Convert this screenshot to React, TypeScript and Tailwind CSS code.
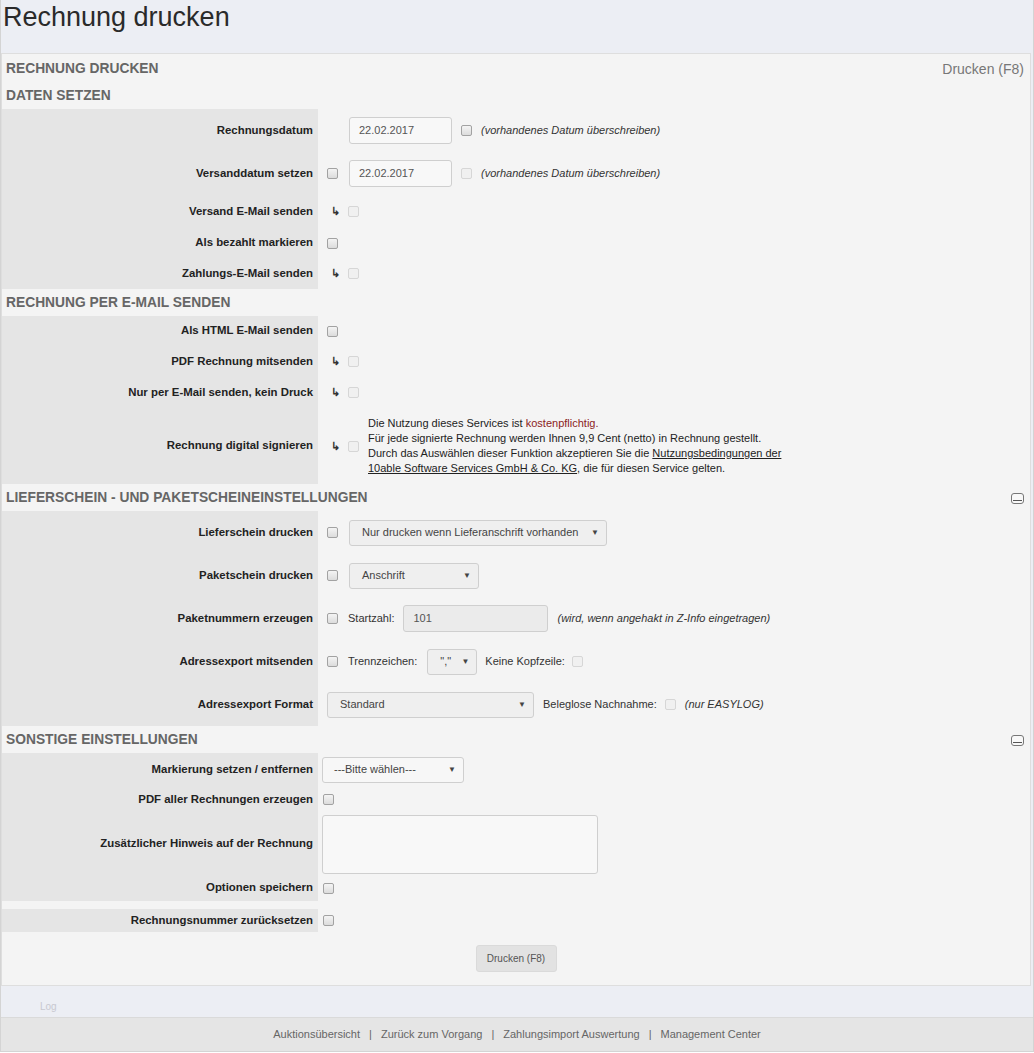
import React from 'react';

const font = { fontFamily: '"Liberation Sans", Arial, sans-serif' };

const Check: React.FC<{ disabled?: boolean; className?: string }> = ({ disabled, className = '' }) => (
  <span
    className={
      'inline-block w-[11px] h-[11px] rounded-[2px] border shrink-0 ' +
      (disabled ? 'border-[#d6d6d6] bg-[#f0f0f0] ' : 'border-[#a2a2a2] bg-gradient-to-b from-[#f4f4f4] to-[#dcdcdc] ') +
      className
    }
  />
);

const Arrow: React.FC = () => <span className="text-[11px] text-[#333] font-bold leading-none w-[19px] pl-[2px] shrink-0">↳</span>;

const Select: React.FC<{ text: string; className: string; textClass?: string }> = ({ text, className, textClass = '' }) => (
  <div className={'flex items-center justify-between h-[26px] border border-[#cfcfcf] rounded-[3px] bg-[#efefef] pr-[7px] shrink-0 ' + className}>
    <span className={'text-[11px] text-[#444] ' + textClass}>{text}</span>
    <span className="text-[8px] text-[#444]">▼</span>
  </div>
);

const Minus: React.FC = () => (
  <span className="inline-flex items-end justify-center w-[13px] h-[11px] border border-[#777] rounded-[3px] pb-[2px] bg-[#f8f8f8]">
    <span className="block w-[9px] h-[1px] bg-[#555]" />
  </span>
);

const Section: React.FC<{ title: string; collapse?: boolean; right?: string }> = ({ title, collapse, right }) => (
  <div className="h-[27px] flex items-center justify-between pl-[4px] pr-[6px] pt-[2px]">
    <span className="text-[13.8px] font-bold text-[#666] uppercase">{title}</span>
    {collapse && <Minus />}
    {right && <span className="text-[14px] text-[#777]">{right}</span>}
  </div>
);

const Row: React.FC<{ label: string; h: string; pl?: string; children?: React.ReactNode }> = ({ label, h, pl = 'pl-[9px]', children }) => (
  <div className={'flex ' + h}>
    <div className="w-[316px] shrink-0 bg-[#e5e5e5] flex items-center justify-end pr-[5px] text-[11.4px] font-bold text-[#222]">
      {label}
    </div>
    <div className={'flex items-center flex-1 ' + pl}>{children}</div>
  </div>
);

const Hint: React.FC<{ children: React.ReactNode; className?: string }> = ({ children, className = '' }) => (
  <span className={'text-[11px] italic text-[#333] ' + className}>{children}</span>
);

const DateInput: React.FC = () => (
  <div className="w-[103px] h-[27px] border border-[#cfcfcf] rounded-[3px] bg-[#f8f8f8] flex items-center pl-[9px] text-[11px] text-[#555] shrink-0">
    22.02.2017
  </div>
);

export default function App() {
  return (
    <div style={font} className="w-full min-h-[1053px] bg-white text-[#333]">
      <div className="border-l border-r border-[#d4d4d4] bg-[#eceef4] min-h-[1050px] border-b">
        {/* Title bar */}
        <div className="h-[53px] pl-[2px]">
          <h1 className="text-[27px] leading-[34px] text-[#2a2a2a]">Rechnung drucken</h1>
        </div>

        {/* Main panel */}
        <div className="mr-[2px] border border-[#dedede] bg-[#f4f4f4] pt-[1px]">
          <Section title="Rechnung drucken" right="Drucken (F8)" />
          <Section title="Daten setzen" />
          <Row label="Rechnungsdatum" h="h-[43px]">
            <span className="w-[22px] shrink-0" />
            <DateInput />
            <Check className="ml-[9px]" />
            <Hint className="ml-[9px]">(vorhandenes Datum überschreiben)</Hint>
          </Row>
          <Row label="Versanddatum setzen" h="h-[43px]">
            <Check className="mr-[11px]" />
            <DateInput />
            <Check disabled className="ml-[9px]" />
            <Hint className="ml-[9px]">(vorhandenes Datum überschreiben)</Hint>
          </Row>
          <Row label="Versand E-Mail senden" h="h-[33px]" pl="pl-[11px]">
            <Arrow />
            <Check disabled />
          </Row>
          <Row label="Als bezahlt markieren" h="h-[30px]">
            <Check />
          </Row>
          <Row label="Zahlungs-E-Mail senden" h="h-[31px]" pl="pl-[11px]">
            <Arrow />
            <Check disabled />
          </Row>

          <Section title="Rechnung per E-Mail senden" />
          <Row label="Als HTML E-Mail senden" h="h-[30px]">
            <Check />
          </Row>
          <Row label="PDF Rechnung mitsenden" h="h-[31px]" pl="pl-[11px]">
            <Arrow />
            <Check disabled />
          </Row>
          <Row label="Nur per E-Mail senden, kein Druck" h="h-[31px]" pl="pl-[11px]">
            <Arrow />
            <Check disabled />
          </Row>
          <Row label="Rechnung digital signieren" h="h-[76px]" pl="pl-[11px]">
            <Arrow />
            <Check disabled />
            <div className="ml-[9px] text-[11px] leading-[15px] text-[#222]">
              Die Nutzung dieses Services ist <span className="text-[#8b1c1c]">kostenpflichtig.</span>
              <br />
              Für jede signierte Rechnung werden Ihnen 9,9 Cent (netto) in Rechnung gestellt.
              <br />
              Durch das Auswählen dieser Funktion akzeptieren Sie die <span className="underline">Nutzungsbedingungen der</span>
              <br />
              <span className="underline">10able Software Services GmbH &amp; Co. KG</span>, die für diesen Service gelten.
            </div>
          </Row>

          <Section title="Lieferschein - und Paketscheineinstellungen" collapse />
          <Row label="Lieferschein drucken" h="h-[43px]">
            <Check className="mr-[11px]" />
            <Select text="Nur drucken wenn Lieferanschrift vorhanden" className="w-[258px] pl-[12px]" />
          </Row>
          <Row label="Paketschein drucken" h="h-[43px]">
            <Check className="mr-[11px]" />
            <Select text="Anschrift" className="w-[130px] pl-[12px]" />
          </Row>
          <Row label="Paketnummern erzeugen" h="h-[43px]">
            <Check className="mr-[10px]" />
            <span className="text-[11px] text-[#333]">Startzahl:</span>
            <div className="ml-[9px] w-[145px] h-[27px] border border-[#cfcfcf] rounded-[3px] bg-[#ebebeb] flex items-center pl-[9px] text-[11px] text-[#555]">
              101
            </div>
            <Hint className="ml-[9px]">(wird, wenn angehakt in Z-Info eingetragen)</Hint>
          </Row>
          <Row label="Adressexport mitsenden" h="h-[43px]">
            <Check className="mr-[10px]" />
            <span className="text-[11px] text-[#333]">Trennzeichen:</span>
            <Select text={'","'} className="ml-[10px] w-[50px] pl-[12px]" />
            <span className="ml-[8px] text-[11px] text-[#333]">Keine Kopfzeile:</span>
            <Check disabled className="ml-[7px]" />
          </Row>
          <Row label="Adressexport Format" h="h-[43px]" pl="pl-[9px]">
            <Select text="Standard" className="w-[207px] pl-[12px]" />
            <span className="ml-[9px] text-[11px] text-[#333]">Beleglose Nachnahme:</span>
            <Check disabled className="ml-[8px]" />
            <Hint className="ml-[9px]">(nur EASYLOG)</Hint>
          </Row>

          <Section title="Sonstige Einstellungen" collapse />
          <Row label="Markierung setzen / entfernen" h="h-[33px]" pl="pl-[4px]">
            <Select text="---Bitte wählen---" className="w-[142px] pl-[11px] bg-[#f7f7f7]" />
          </Row>
          <Row label="PDF aller Rechnungen erzeugen" h="h-[27px]" pl="pl-[5px]">
            <Check />
          </Row>
          <Row label="Zusätzlicher Hinweis auf der Rechnung" h="h-[62px]" pl="pl-[4px]">
            <div className="w-[276px] h-[59px] border border-[#cfcfcf] rounded-[3px] bg-[#f8f8f8]" />
          </Row>
          <Row label="Optionen speichern" h="h-[26px]" pl="pl-[5px]">
            <Check />
          </Row>
          <div className="h-[8px]" />
          <Row label="Rechnungsnummer zurücksetzen" h="h-[23px]" pl="pl-[5px]">
            <Check />
          </Row>

          <div className="h-[53px] flex items-center justify-center">
            <button className="w-[81px] h-[27px] rounded-[3px] bg-[#e2e2e2] border border-[#dadada] text-[10px] text-[#555]">
              Drucken (F8)
            </button>
          </div>
        </div>

        {/* Log band */}
        <div className="h-[31px] flex items-end pl-[39px] pb-[3px]">
          <span className="text-[10px] text-[#c8c8d0]">Log</span>
        </div>

        {/* Footer */}
        <div className="h-[34px] bg-[#e5e5e5] border-t border-[#dadada] flex items-center justify-center text-[11px] text-[#666] gap-[9px]">
          <span>Auktionsübersicht</span>
          <span>|</span>
          <span>Zurück zum Vorgang</span>
          <span>|</span>
          <span>Zahlungsimport Auswertung</span>
          <span>|</span>
          <span>Management Center</span>
        </div>
      </div>
    </div>
  );
}
